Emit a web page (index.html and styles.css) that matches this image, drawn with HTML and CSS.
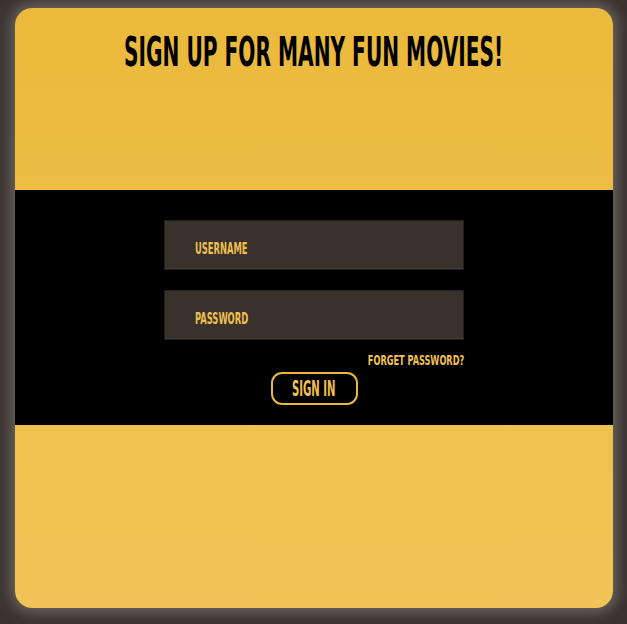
FILE: index.html
```html
<!DOCTYPE html>
<html>
<head>
<meta charset="utf-8">
<link rel="stylesheet" href="styles.css">
</head>
<body>
<div class="card">
  <header class="head">
    <h1 class="title"><span class="squeeze">Sign up for many fun movies!</span></h1>
  </header>
  <section class="band">
    <form class="form">
      <div class="field"><span class="squeeze">Username</span></div>
      <div class="field"><span class="squeeze">Password</span></div>
      <div class="forgot"><span class="squeeze">Forget password?</span></div>
      <div class="actions"><button type="button" class="btn"><span class="squeeze">Sign in</span></button></div>
    </form>
  </section>
  <div class="foot"></div>
</div>
</body>
</html>
```
FILE: styles.css
```css
html, body {
  margin: 0;
  height: 100%;
}
body {
  background: #3b3330;
  font-family: "DejaVu Sans Condensed", "DejaVu Sans", sans-serif;
  padding: 8px 14px 16px 15px;
  box-sizing: border-box;
}
.card {
  height: 600px;
  border-radius: 17px;
  background: linear-gradient(180deg, #ebb93b 0%, #f0c456 100%);
  box-shadow: 0 0 14px 4px #6e6863;
  overflow: hidden;
  display: flex;
  flex-direction: column;
}
.head {
  height: 182px;
}
.title {
  margin: 0;
  padding-top: 20px;
  display: flex;
  justify-content: center;
  font-size: 40px;
  line-height: 48px;
  font-weight: bold;
  text-transform: uppercase;
  color: #000;
}
.squeeze {
  display: inline-block;
  transform: scaleX(0.7);
  white-space: nowrap;
}
.title .squeeze {
  transform: scaleX(0.56);
}
.band {
  height: 235px;
  background: #000;
  display: flex;
  justify-content: center;
  padding-top: 30px;
  box-sizing: border-box;
}
.form {
  width: 300px;
  display: flex;
  flex-direction: column;
}
.field {
  height: 50px;
  box-sizing: border-box;
  background: #3a302c;
  border: 1px solid #251f1c;
  margin-bottom: 20px;
  padding-left: 30px;
  padding-top: 7px;
  display: flex;
  align-items: center;
  color: #f0c04e;
  font-size: 15px;
  font-weight: bold;
  text-transform: uppercase;
  box-shadow: inset 0 -3px 0 -2px #443a35;
}
.field .squeeze {
  transform: scaleX(0.62);
  transform-origin: left center;
}
.forgot {
  margin-top: -8px;
  text-align: right;
  color: #f0c04e;
  font-size: 14px;
  font-weight: bold;
  text-transform: uppercase;
  line-height: 16px;
}
.forgot .squeeze {
  transform: scaleX(0.65);
  transform-origin: right center;
}
.actions {
  display: flex;
  justify-content: center;
  margin-top: 4px;
}
.btn {
  width: 87px;
  height: 33px;
  border: 2px solid #e9b73a;
  border-radius: 11px;
  background: #000;
  color: #f0c04e;
  font-family: inherit;
  font-size: 22px;
  font-weight: bold;
  text-transform: uppercase;
  padding: 0;
  display: flex;
  justify-content: center;
  align-items: center;
}
.btn .squeeze {
  transform: scaleX(0.51);
}
.foot {
  flex: 1;
}
```
